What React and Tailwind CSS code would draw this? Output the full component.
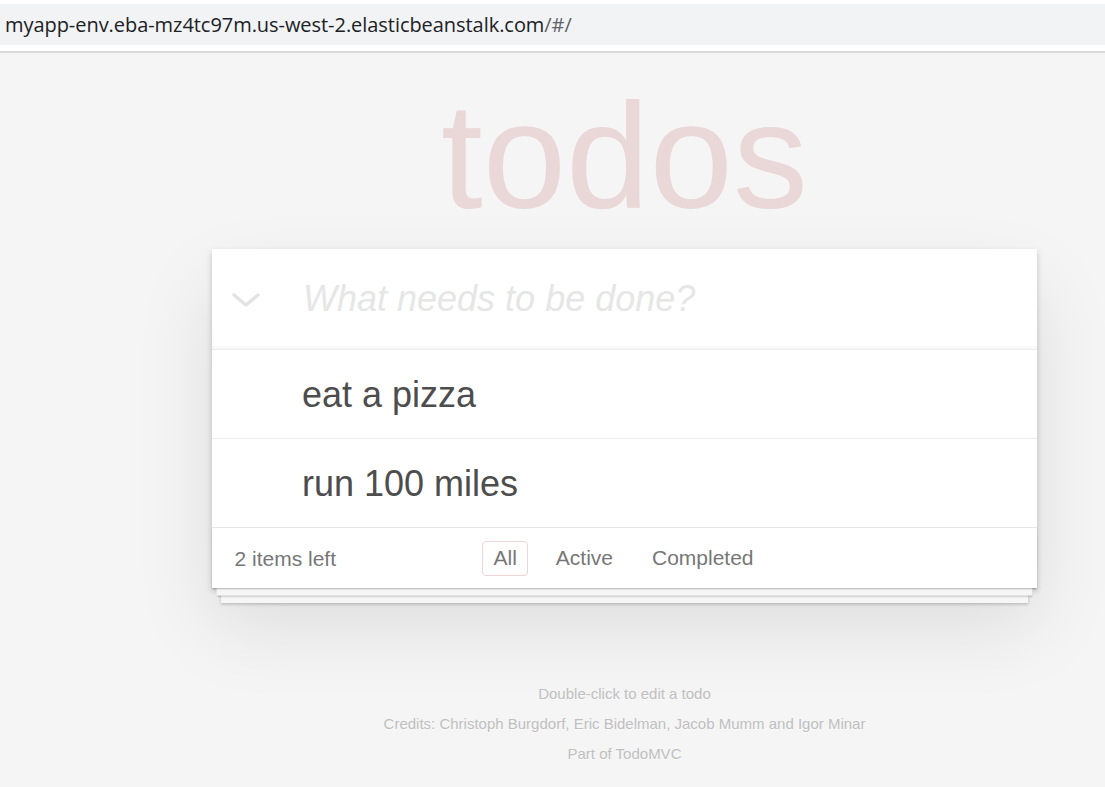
import React from "react";

const todos = [
	{ id: 1, title: "eat a pizza" },
	{ id: 2, title: "run 100 miles" },
];

const filters = ["All", "Active", "Completed"];

const AddressBar = () => (
	<div className="bg-white pt-[4px]">
		<div className="h-[41px] bg-[#f1f3f4] flex items-center pl-[5px]">
			<span className="text-[20px] text-[#202124] font-['Open_Sans','Noto_Sans',sans-serif] tracking-[-0.05px]">
				myapp-env.eba-mz4tc97m.us-west-2.elasticbeanstalk.com
				<span className="text-[#5f6368]">/#/</span>
			</span>
		</div>
		<div className="h-[6px] bg-white" />
		<div className="h-[2px] bg-[#dadada]" />
	</div>
);

const Chevron = () => (
	<svg width="30" height="20" viewBox="0 0 30 20" className="absolute left-[231px] top-[289px]">
		<polyline
			points="3,6 15,16 27,6"
			fill="none"
			stroke="#e3e3e3"
			strokeWidth="3.5"
			strokeLinecap="round"
			strokeLinejoin="round"
		/>
	</svg>
);

const App = () => {
	return (
		<div className="min-h-screen bg-[#f5f5f5] font-['Liberation_Sans',Arial,sans-serif] relative">
			<AddressBar />

			<div className="ml-[212px] w-[825px]">
				{/* Titulo */}
				<h1 className="mt-[28px] mb-[18px] h-[150px] text-center text-[150px] leading-[150px] font-thin text-[#ead7d7]">
					todos
				</h1>

				<section className="bg-white shadow-[0_3px_6px_rgba(0,0,0,0.2),0_37px_75px_rgba(0,0,0,0.1)]">
					<div className="h-[100px] flex items-center pl-[91px] shadow-[inset_0_-3px_1.5px_rgba(0,0,0,0.03)]">
						<span className="text-[36px] italic text-[#e6e6e6]">What needs to be done?</span>
					</div>

					<ul>
						{todos.map((todo) => (
							<li
								key={todo.id}
								className="border-t border-[#ededed] pl-[90px] py-[22.5px] text-[36px] leading-[1.2] text-[#4d4d4d]"
							>
								{todo.title}
							</li>
						))}
					</ul>

					<footer className="relative border-t border-[#e6e6e6] h-[61px] px-[22.5px] flex items-center text-[21px] text-[#777] shadow-[0_1.5px_1.5px_rgba(0,0,0,0.2),0_12px_0_-4.5px_#f6f6f6,0_13.5px_1.5px_-4.5px_rgba(0,0,0,0.2),0_24px_0_-9px_#f6f6f6,0_25.5px_3px_-9px_rgba(0,0,0,0.2)]">
						<span>2 items left</span>
						<div className="absolute inset-x-0 top-0 bottom-0 flex items-center justify-center gap-[16px] pr-[2px]">
							{filters.map((f) => (
								<span
									key={f}
									className={`px-[10.5px] py-[4.5px] leading-[24px] rounded-[4px] border ${
										f === "All" ? "border-[#efd5d5]" : "border-transparent"
									}`}
								>
									{f}
								</span>
							))}
						</div>
					</footer>
				</section>

				<div className="mt-[91px] text-center text-[15px] leading-[30px] text-[#bfbfbf] [text-shadow:0_1px_0_rgba(255,255,255,0.5)]">
					<p>Double-click to edit a todo</p>
					<p>Credits: Christoph Burgdorf, Eric Bidelman, Jacob Mumm and Igor Minar</p>
					<p>Part of TodoMVC</p>
				</div>
			</div>

			<Chevron />
		</div>
	);
};

export default App;
